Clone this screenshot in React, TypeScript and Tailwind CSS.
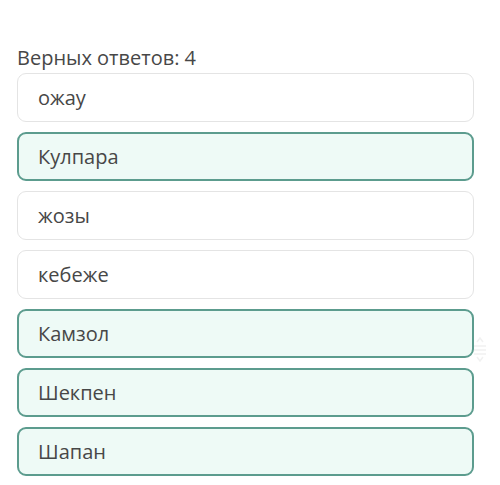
const items: { label: string; correct: boolean }[] = [
  { label: "ожау", correct: false },
  { label: "Кулпара", correct: true },
  { label: "жозы", correct: false },
  { label: "кебеже", correct: false },
  { label: "Камзол", correct: true },
  { label: "Шекпен", correct: true },
  { label: "Шапан", correct: true },
];

export default function App() {
  return (
    <div className="relative h-[485px] w-[500px] overflow-hidden bg-white font-['Open_Sans',sans-serif] text-[#474747]">
      <div className="pl-[17px] pt-[45px]">
        <p className="text-[20px] leading-[26px]">Верных ответов: 4</p>
        <div className="mt-[2px] flex w-[457px] flex-col gap-[10px]">
          {items.map((it) => (
            <div
              key={it.label}
              className={
                it.correct
                  ? "flex h-[49px] items-center rounded-[9px] border-2 border-[#5c9c8e] bg-[#eefaf6] pl-[19px] text-[20px]"
                  : "flex h-[49px] items-center rounded-[9px] border border-[#e4e4e4] bg-white pl-[20px] text-[20px]"
              }
            >
              {it.label}
            </div>
          ))}
        </div>
      </div>
      <svg
        className="absolute left-[473px] top-[335px]"
        width="14"
        height="28"
        viewBox="0 0 14 28"
        fill="none"
        stroke="#f1f1f1"
        strokeWidth="1.5"
      >
        <path d="M4 7l3-4 3 4" />
        <path d="M1 11h12M1 15h12M1 19h12" />
        <path d="M4 22l3 4 3-4" />
      </svg>
    </div>
  );
}
